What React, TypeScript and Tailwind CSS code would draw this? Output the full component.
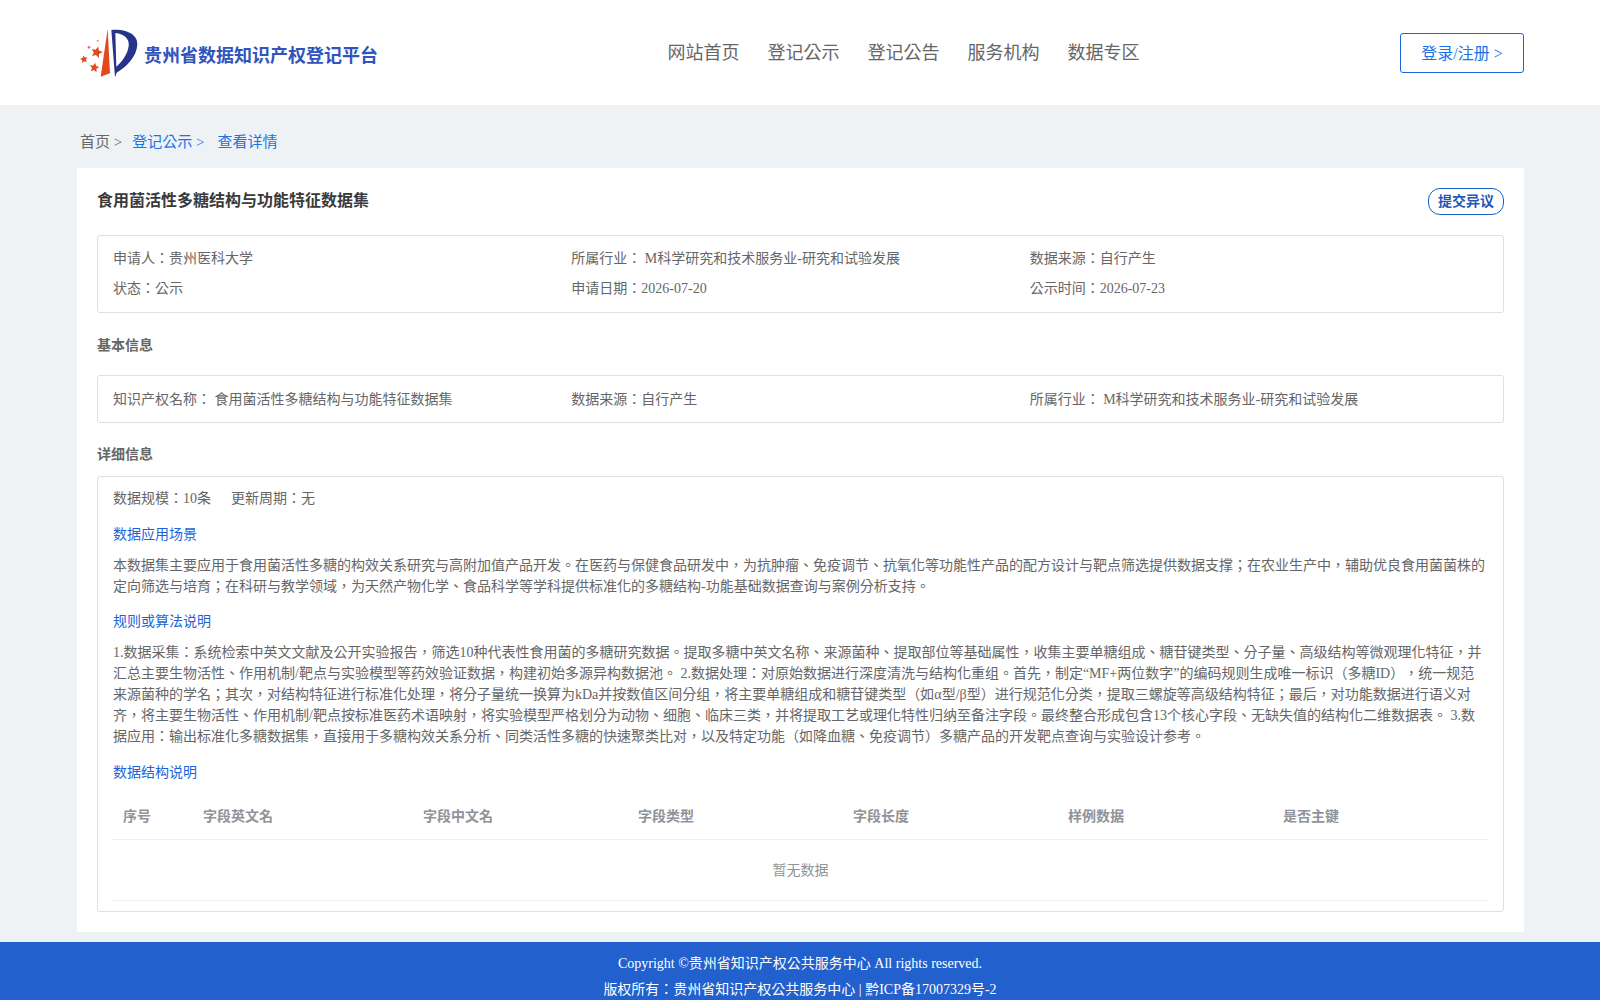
const navItems = ["网站首页", "登记公示", "登记公告", "服务机构", "数据专区"];
const fieldCols = [
  { label: "序号", width: "w-[80px]" },
  { label: "字段英文名", width: "w-[220px]" },
  { label: "字段中文名", width: "w-[215px]" },
  { label: "字段类型", width: "w-[215px]" },
  { label: "字段长度", width: "w-[215px]" },
  { label: "样例数据", width: "w-[215px]" },
  { label: "是否主键", width: "flex-1" },
];

function starPoints(cx: number, cy: number, r: number, rot: number) {
  const pts: string[] = [];
  for (let i = 0; i < 10; i++) {
    const rad = i % 2 === 0 ? r : r * 0.48;
    const a = ((rot + i * 36 - 90) * Math.PI) / 180;
    pts.push(`${(cx + rad * Math.cos(a)).toFixed(1)},${(cy + rad * Math.sin(a)).toFixed(1)}`);
  }
  return pts.join(" ");
}

function Logo() {
  return (
    <svg width="68" height="58" viewBox="0 0 204 174" className="shrink-0">
      <path d="M95 15 L74 158 L102 148 Z" fill="#e2491c" />
      <path
        fillRule="evenodd"
        d="M106 18 C148 14 186 30 184 62 C182 100 148 130 122 146 L117 160 Z M118 27 C146 30 161 46 158 66 C155 90 138 114 121 128 Z"
        fill="#27348b"
      />
      <polygon points={starPoints(62, 85, 18, 15)} fill="#e2491c" />
      <polygon points={starPoints(24, 106, 12, -10)} fill="#e2491c" />
      <polygon points={starPoints(55, 131, 15, 10)} fill="#e2491c" />
      <circle cx="39" cy="70" r="4" fill="#e8734f" />
      <circle cx="65" cy="50" r="3" fill="#eb8a6c" />
    </svg>
  );
}

function Field({ children }: { children: React.ReactNode }) {
  return <div className="flex-1 min-w-0">{children}</div>;
}

export default function App() {
  return (
    <div className="min-h-[1000px] bg-[#eef2f5] font-['Liberation_Serif','Noto_Sans_CJK_TC',serif] text-sm leading-[21px] text-[#666666] [text-spacing-trim:space-all]">
      <header className="h-[105px] bg-white flex items-center justify-between pl-[76px] pr-[76px]">
        <div className="flex items-center w-[304px]">
          <Logo />
          <span className="text-[18px] font-bold text-[#2f55bd] whitespace-nowrap mt-[8px]">贵州省数据知识产权登记平台</span>
        </div>
        <nav className="flex gap-[28px] text-[18px] text-[#666666] ml-[27px] mt-[2px]">
          {navItems.map((item) => (
            <span key={item}>{item}</span>
          ))}
        </nav>
        <button className="w-[124px] h-[40px] border border-[#1a66e0] rounded-[3px] text-[16px] text-[#1a73e8] pt-[2px]">登录/注册 &gt;</button>
      </header>

      <main className="pl-[77px] pr-[76px]">
        <div className="h-[63px] flex items-center text-[15px] pl-[3px] pt-[12px]">
          <span className="mr-[10px]">首页 &gt;</span>
          <span className="text-[#1a73e8] mr-[13px]">登记公示 &gt;</span>
          <span className="text-[#1a73e8]">查看详情</span>
        </div>

        <div className="bg-white px-[20px] pt-[20px] pb-[20px]">
          <div className="flex items-start justify-between h-[26px]">
            <h1 className="text-base font-bold text-[#3a3a3a] mt-[1px]">食用菌活性多糖结构与功能特征数据集</h1>
            <button className="w-[76px] h-[27px] rounded-[12px] border border-[#1a5fc8] text-sm font-bold text-[#2257b8]">提交异议</button>
          </div>

          <div className="mt-[21px] h-[78px] border border-[#dcdfe6] rounded-[3px] px-[15px] pt-[12px] space-y-[9px]">
            <div className="flex">
              <Field>申请人：贵州医科大学</Field>
              <Field>所属行业： M科学研究和技术服务业-研究和试验发展</Field>
              <Field>数据来源：自行产生</Field>
            </div>
            <div className="flex">
              <Field>状态：公示</Field>
              <Field>申请日期：2026-07-20</Field>
              <Field>公示时间：2026-07-23</Field>
            </div>
          </div>

          <h2 className="mt-[22px] font-bold">基本信息</h2>

          <div className="mt-[19px] h-[48px] border border-[#dcdfe6] rounded-[3px] px-[15px] flex items-center">
            <Field>知识产权名称： 食用菌活性多糖结构与功能特征数据集</Field>
            <Field>数据来源：自行产生</Field>
            <Field>所属行业： M科学研究和技术服务业-研究和试验发展</Field>
          </div>

          <h2 className="mt-[21px] font-bold">详细信息</h2>

          <div className="mt-[11px] border border-[#dcdfe6] rounded-[3px] px-[15px] pt-[11px] pb-[10px]">
            <div className="flex gap-[20px]">
              <span>数据规模：10条</span>
              <span>更新周期：无</span>
            </div>

            <h3 className="mt-[15px] text-[#1a66d8]">数据应用场景</h3>
            <p className="mt-[10px]">
              本数据集主要应用于食用菌活性多糖的构效关系研究与高附加值产品开发。在医药与保健食品研发中，为抗肿瘤、免疫调节、抗氧化等功能性产品的配方设计与靶点筛选提供数据支撑；在农业生产中，辅助优良食用菌菌株的定向筛选与培育；在科研与教学领域，为天然产物化学、食品科学等学科提供标准化的多糖结构-功能基础数据查询与案例分析支持。
            </p>

            <h3 className="mt-[14px] text-[#1a66d8]">规则或算法说明</h3>
            <p className="mt-[10px]">
              1.数据采集：系统检索中英文文献及公开实验报告，筛选10种代表性食用菌的多糖研究数据。提取多糖中英文名称、来源菌种、提取部位等基础属性，收集主要单糖组成、糖苷键类型、分子量、高级结构等微观理化特征，并汇总主要生物活性、作用机制/靶点与实验模型等药效验证数据，构建初始多源异构数据池。 2.数据处理：对原始数据进行深度清洗与结构化重组。首先，制定“MF+两位数字”的编码规则生成唯一标识（多糖ID），统一规范来源菌种的学名；其次，对结构特征进行标准化处理，将分子量统一换算为kDa并按数值区间分组，将主要单糖组成和糖苷键类型（如α型/β型）进行规范化分类，提取三螺旋等高级结构特征；最后，对功能数据进行语义对齐，将主要生物活性、作用机制/靶点按标准医药术语映射，将实验模型严格划分为动物、细胞、临床三类，并将提取工艺或理化特性归纳至备注字段。最终整合形成包含13个核心字段、无缺失值的结构化二维数据表。 3.数据应用：输出标准化多糖数据集，直接用于多糖构效关系分析、同类活性多糖的快速聚类比对，以及特定功能（如降血糖、免疫调节）多糖产品的开发靶点查询与实验设计参考。
            </p>

            <h3 className="mt-[15px] text-[#1a66d8]">数据结构说明</h3>

            <div className="mt-[10px]">
              <div className="flex h-[47px] items-center border-b border-[#ebeef5] font-bold text-[#909399]">
                {fieldCols.map((col) => (
                  <div key={col.label} className={`${col.width} pl-[10px]`}>{col.label}</div>
                ))}
              </div>
              <div className="h-[61px] flex items-center justify-center border-b border-[#ebeef5] text-[#909399]">暂无数据</div>
            </div>
          </div>
        </div>
      </main>

      <footer className="mt-[10px] bg-[#2160cd] text-white text-center pt-[9px] pb-[6px] leading-[26px]">
        <div>Copyright ©贵州省知识产权公共服务中心 All rights reserved.</div>
        <div>版权所有：贵州省知识产权公共服务中心 | 黔ICP备17007329号-2</div>
      </footer>
    </div>
  );
}
